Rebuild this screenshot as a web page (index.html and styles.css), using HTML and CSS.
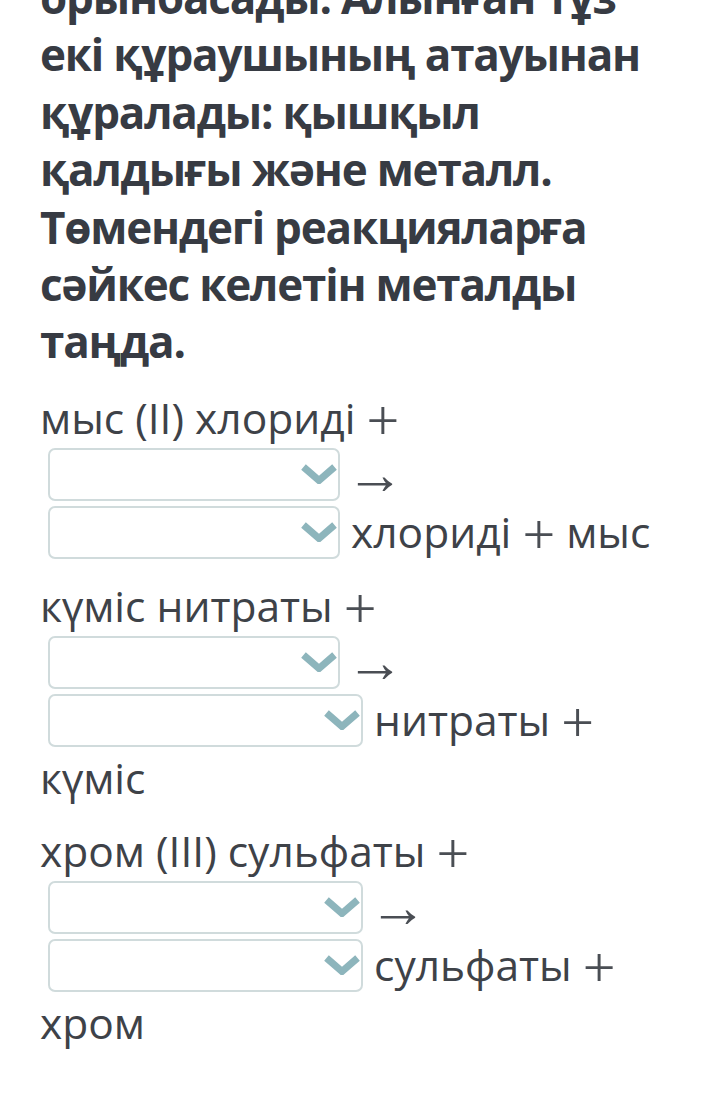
FILE: index.html
```html
<!DOCTYPE html>
<html lang="kk">
<head>
<meta charset="utf-8">
<title>Тапсырма</title>
<link rel="stylesheet" href="styles.css">
</head>
<body>
<main class="page">
  <h1 class="question">орынбасады. Алынған тұз екі құраушының атауынан құралады: қышқыл қалдығы және металл. Төмендегі реакцияларға сәйкес келетін металды таңда.</h1>

  <p class="reaction">мыс (II) хлориді <span class="op">+</span> <span class="select w1"><svg class="chev" viewBox="0 0 38 20" aria-hidden="true"><polyline points="3.5,3 19,16.5 34.5,3"/></svg></span> <span class="op arrow">→</span> <span class="select w1"><svg class="chev" viewBox="0 0 38 20" aria-hidden="true"><polyline points="3.5,3 19,16.5 34.5,3"/></svg></span> хлориді <span class="op">+</span> мыс</p>

  <p class="reaction">күміс нитраты <span class="op">+</span> <span class="select w1"><svg class="chev" viewBox="0 0 38 20" aria-hidden="true"><polyline points="3.5,3 19,16.5 34.5,3"/></svg></span> <span class="op arrow">→</span> <span class="select w2"><svg class="chev" viewBox="0 0 38 20" aria-hidden="true"><polyline points="3.5,3 19,16.5 34.5,3"/></svg></span> нитраты <span class="op">+</span> күміс</p>

  <p class="reaction">хром (III) сульфаты <span class="op">+</span> <span class="select w2"><svg class="chev" viewBox="0 0 38 20" aria-hidden="true"><polyline points="3.5,3 19,16.5 34.5,3"/></svg></span> <span class="op arrow">→</span> <span class="select w2"><svg class="chev" viewBox="0 0 38 20" aria-hidden="true"><polyline points="3.5,3 19,16.5 34.5,3"/></svg></span> сульфаты <span class="op">+</span> хром</p>
</main>
</body>
</html>
```

FILE: styles.css
```css
html, body {
  margin: 0;
  padding: 0;
  background: #ffffff;
}

.page {
  width: 630px;
  padding: 0 50px 0 40px;
  margin-top: -31px;
  font-family: "Open Sans", "Noto Sans", sans-serif;
  color: #3e4248;
}

.question {
  margin: 0 0 18px;
  font-size: 44px;
  letter-spacing: -1.2px;
  line-height: 57.4px;
  font-weight: 700;
  color: #373b43;
}

.reaction {
  margin: 0 0 16px;
  font-size: 42.5px;
  line-height: 57px;
  font-weight: 400;
}

.op {
  font-family: "Liberation Serif", "DejaVu Serif", serif;
  font-size: 58px;
  line-height: 10px;
  font-weight: 400;
  color: #4a4e54;
  vertical-align: -6px;
}

.arrow {
  font-size: 58px;
  vertical-align: -3px;
  margin-left: -5px;
}

.select {
  display: inline-block;
  box-sizing: border-box;
  position: relative;
  height: 53px;
  margin: 2px 0 2px 8px;
  vertical-align: -12.5px;
  border: 2px solid #d0dbdc;
  border-radius: 7px;
  background: #ffffff;
}

.w1 { width: 292px; }
.w2 { width: 315px; }

.chev {
  position: absolute;
  right: 0;
  top: 14px;
  width: 38px;
  height: 20px;
}

.chev polyline {
  fill: none;
  stroke: #8db5bc;
  stroke-width: 7;
  stroke-linejoin: miter;
  stroke-linecap: butt;
}
```
